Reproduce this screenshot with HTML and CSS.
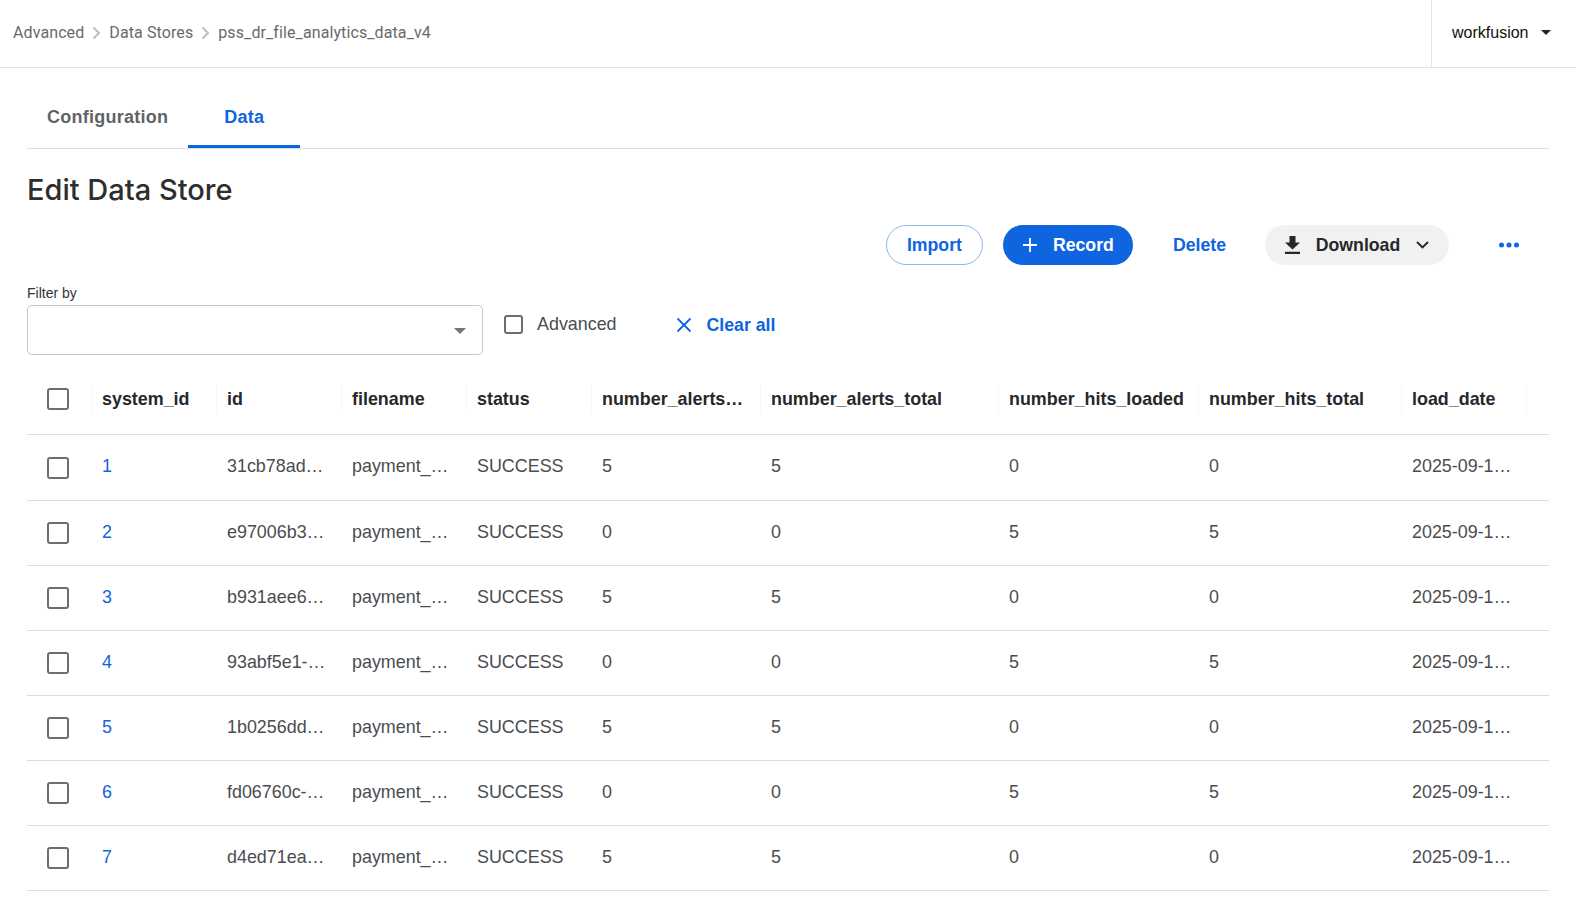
FILE: index.html
```html
<!DOCTYPE html>
<html lang="en">
<head>
  <meta charset="UTF-8">
  <title>Edit Data Store</title>
  <link rel="stylesheet" href="styles.css">
</head>
<body>
  <div class="header">
    <div class="breadcrumbs">
      <span>Advanced</span>
      <svg width="9" height="14" viewBox="0 0 9 14"><path d="M1.5 1.5 7 7l-5.500 5.500" fill="none" stroke="#bdbdbd" stroke-width="2"/></svg>
      <span>Data Stores</span>
      <svg width="9" height="14" viewBox="0 0 9 14"><path d="M1.5 1.5 7 7l-5.500 5.500" fill="none" stroke="#bdbdbd" stroke-width="2"/></svg>
      <span>pss_dr_file_analytics_data_v4</span>
    </div>
    <div class="user-menu">
      <span>workfusion</span>
      <span class="caret caret-dark"></span>
    </div>
  </div>

  <div class="main-container">
    <div class="tabs">
      <div class="tab">Configuration</div>
      <div class="tab tab-active">Data</div>
    </div>

    <h1 class="page-title">Edit Data Store</h1>

    <div class="actions">
      <button class="btn btn-outline">Import</button>
      <button class="btn btn-primary">
        <svg width="16" height="16" viewBox="0 0 16 16"><path d="M8 1v14M1 8h14" stroke="#fff" stroke-width="1.8"/></svg>
        Record
      </button>
      <button class="btn btn-link">Delete</button>
      <button class="btn btn-grey">
        <svg width="15" height="18" viewBox="0 0 15 18"><path d="M4.500 0h6v6.500H15L7.500 13.500 0 6.500h4.500zM0 15.800h15V18H0z" fill="#26282b"/></svg>
        <span class="btn-grey-label">Download</span>
        <svg width="13" height="8" viewBox="0 0 13 8"><path d="M1 1l5.500 5.500L12 1" fill="none" stroke="#26282b" stroke-width="1.900"/></svg>
      </button>
      <button class="btn-more">
        <svg width="20" height="6" viewBox="0 0 20 6"><circle cx="2.500" cy="3" r="2.500" fill="#0f64e0"/><circle cx="10" cy="3" r="2.500" fill="#0f64e0"/><circle cx="17.500" cy="3" r="2.500" fill="#0f64e0"/></svg>
      </button>
    </div>

    <div class="filters">
      <div class="filter-field">
        <label class="filter-label">Filter by</label>
        <div class="filter-select"><span class="caret caret-grey"></span></div>
      </div>
      <div class="filter-advanced">
        <span class="checkbox checkbox-small"></span>
        <span>Advanced</span>
      </div>
      <div class="clear-all">
        <svg width="16" height="16" viewBox="0 0 16 16"><path d="M1.500 1.500l13 13M14.500 1.500l-13 13" stroke="#0f64e0" stroke-width="1.800"/></svg>
        <span>Clear all</span>
      </div>
    </div>

    <table class="data-table">
      <colgroup>
        <col class="col-check">
        <col class="col-std"><col class="col-std"><col class="col-std"><col class="col-std">
        <col class="col-alerts-loaded">
        <col class="col-alerts-total">
        <col class="col-hits">
        <col class="col-hits-total">
        <col class="col-std">
        <col>
      </colgroup>
      <thead>
        <tr>
          <th class="check-cell"><span class="checkbox"></span></th>
          <th>system_id</th>
          <th>id</th>
          <th>filename</th>
          <th>status</th>
          <th>number_alerts_loaded</th>
          <th>number_alerts_total</th>
          <th class="th-wide">number_hits_loaded</th>
          <th>number_hits_total</th>
          <th>load_date</th>
          <th class="th-end"></th>
        </tr>
      </thead>
      <tbody>
        <tr><td class="check-cell"><span class="checkbox"></span></td><td class="link">1</td><td>31cb78ad-4f1c-4e</td><td>payment_alerts.csv</td><td>SUCCESS</td><td>5</td><td>5</td><td>0</td><td>0</td><td>2025-09-15 10:22</td><td></td></tr>
        <tr><td class="check-cell"><span class="checkbox"></span></td><td class="link">2</td><td>e97006b3-a2d1-47</td><td>payment_hits.csv</td><td>SUCCESS</td><td>0</td><td>0</td><td>5</td><td>5</td><td>2025-09-15 10:22</td><td></td></tr>
        <tr><td class="check-cell"><span class="checkbox"></span></td><td class="link">3</td><td>b931aee6-77c0-41</td><td>payment_alerts.csv</td><td>SUCCESS</td><td>5</td><td>5</td><td>0</td><td>0</td><td>2025-09-15 10:22</td><td></td></tr>
        <tr><td class="check-cell"><span class="checkbox"></span></td><td class="link">4</td><td>93abf5e1-06bd-4c</td><td>payment_hits.csv</td><td>SUCCESS</td><td>0</td><td>0</td><td>5</td><td>5</td><td>2025-09-15 10:22</td><td></td></tr>
        <tr><td class="check-cell"><span class="checkbox"></span></td><td class="link">5</td><td>1b0256dd-93ea-48</td><td>payment_alerts.csv</td><td>SUCCESS</td><td>5</td><td>5</td><td>0</td><td>0</td><td>2025-09-15 10:22</td><td></td></tr>
        <tr><td class="check-cell"><span class="checkbox"></span></td><td class="link">6</td><td>fd06760c-5b12-4a</td><td>payment_hits.csv</td><td>SUCCESS</td><td>0</td><td>0</td><td>5</td><td>5</td><td>2025-09-15 10:22</td><td></td></tr>
        <tr><td class="check-cell"><span class="checkbox"></span></td><td class="link">7</td><td>d4ed71ea-c830-4d</td><td>payment_alerts.csv</td><td>SUCCESS</td><td>5</td><td>5</td><td>0</td><td>0</td><td>2025-09-15 10:22</td><td></td></tr>
      </tbody>
    </table>
  </div>
</body>
</html>
```

FILE: styles.css
```css
body {
  font-family: Roboto, "Liberation Sans", sans-serif;
  background-color: white;
  color: #26282b;
  margin: 0;
  padding: 0;
  overflow: hidden;
}

.header {
  height: 67px;
  display: flex;
  justify-content: space-between;
  border-bottom: 1px solid #e4e4e4;
}

.breadcrumbs {
  display: flex;
  align-items: center;
  gap: 8px;
  padding-left: 13px;
  padding-bottom: 2px;
  font-size: 16px;
  letter-spacing: 0.1px;
  color: #666a6f;
}

.user-menu {
  width: 145px;
  box-sizing: border-box;
  border-left: 1px solid #e4e4e4;
  padding-left: 20px;
  padding-bottom: 2px;
  display: flex;
  align-items: center;
  gap: 13px;
  font-family: "Liberation Sans", sans-serif;
  font-size: 16px;
  color: #111;
}

.caret {
  width: 0;
  height: 0;
  border-left: 5.5px solid transparent;
  border-right: 5.5px solid transparent;
}

.caret-dark {
  border-top: 5.5px solid #222;
}

.caret-grey {
  border-top: 6.5px solid #757575;
  border-left-width: 6.5px;
  border-right-width: 6.5px;
}

.main-container {
  padding: 0 27px;
}

.tabs {
  display: flex;
  height: 81px;
  box-sizing: border-box;
  border-bottom: 1px solid #dedede;
}

.tab {
  padding: 39px 20px 0;
  font-family: "Liberation Sans", sans-serif;
  font-size: 18px;
  letter-spacing: 0.25px;
  font-weight: bold;
  color: #5f6368;
}

.tab-active {
  color: #0f64e0;
  padding: 39px 36px 0;
  height: 38px;
  border-bottom: 3px solid #0f64e0;
}

.page-title {
  margin: 24px 0 0;
  font-family: Inter, sans-serif;
  font-size: 29px;
  line-height: 34px;
  font-weight: 500;
  color: #2e2e2e;
}

.actions {
  display: flex;
  justify-content: flex-end;
  align-items: center;
  margin-top: 18px;
  padding-right: 30px;
}

.btn {
  height: 40px;
  border-radius: 20px;
  border: none;
  background: none;
  display: flex;
  align-items: center;
  font-family: "Liberation Sans", sans-serif;
  font-size: 17.7px;
  font-weight: bold;
  cursor: pointer;
}

.btn-outline {
  width: 97px;
  justify-content: center;
  border: 1px solid #8db5ef;
  color: #0f64e0;
  margin-right: 20px;
}

.btn-primary {
  width: 130px;
  justify-content: center;
  gap: 15px;
  background-color: #0f64e0;
  color: white;
}

.btn-link {
  color: #0f64e0;
  padding: 0 20px;
  margin: 0 19px 0 20px;
}

.btn-grey {
  width: 184px;
  justify-content: center;
  background-color: #f1f1f1;
  color: #26282b;
}

.btn-grey-label {
  margin: 0 16px;
}

.btn-more {
  border: none;
  background: none;
  padding: 0;
  margin-left: 50px;
  display: flex;
}

.filters {
  display: flex;
  margin-top: 19px;
}

.filter-field {
  width: 456px;
}

.filter-label {
  display: block;
  font-family: "Liberation Sans", sans-serif;
  font-size: 14px;
  line-height: 18px;
  color: #333;
  margin-bottom: 3px;
}

.filter-select {
  height: 46px;
  border: 1px solid #c6c6c6;
  border-radius: 5px;
  display: flex;
  align-items: center;
  justify-content: flex-end;
  padding-right: 16px;
  padding-top: 2px;
}

.filter-advanced {
  display: flex;
  align-items: center;
  gap: 14px;
  margin-left: 21px;
  height: 24px;
  margin-top: 28px;
  font-family: "Liberation Sans", sans-serif;
  font-size: 17.9px;
  color: #4a4d50;
}

.clear-all {
  display: flex;
  align-items: center;
  gap: 15px;
  margin-left: 59px;
  height: 24px;
  margin-top: 29px;
  font-family: "Liberation Sans", sans-serif;
  font-size: 17.7px;
  font-weight: bold;
  color: #0f64e0;
}

.checkbox {
  display: block;
  box-sizing: border-box;
  width: 22px;
  height: 22px;
  border: 2.500px solid #6b6e72;
  border-radius: 3px;
}

.checkbox-small {
  width: 19px;
  height: 19px;
}

.data-table {
  width: 100%;
  table-layout: fixed;
  border-collapse: collapse;
  margin-top: 16px;
  font-family: "Liberation Sans", sans-serif;
  font-size: 17.9px;
}

.col-check { width: 65px; }
.col-std { width: 125px; }
.col-alerts-loaded { width: 169px; }
.col-alerts-total { width: 238px; }
.col-hits { width: 200px; }
.col-hits-total { width: 203px; }

.data-table th,
.data-table td {
  text-align: left;
  padding: 0 14px 0 10px;
  white-space: nowrap;
  overflow: hidden;
  text-overflow: ellipsis;
  border-bottom: 1px solid #dcdcdc;
}

.data-table th {
  position: relative;
  height: 57px;
  padding-bottom: 6px;
  font-weight: bold;
  color: #26282b;
}

/* faint column resize handle */
.data-table th::after {
  content: "";
  position: absolute;
  right: 0;
  top: 14px;
  height: 28px;
  width: 1px;
  background-color: #f6f6f6;
}

.data-table th.th-end::after {
  display: none;
}

.data-table th.th-wide {
  padding-right: 8px;
}

.data-table td {
  height: 62px;
  padding-bottom: 2px;
  color: #4a4d50;
}

.data-table tbody tr:first-child td {
  height: 63px;
}

.data-table .check-cell {
  padding-left: 20px;
  padding-right: 0;
  text-overflow: clip;
}

.data-table th.check-cell {
  height: 55px;
  padding-bottom: 8px;
}

.data-table td.check-cell {
  padding-bottom: 0;
  height: 64px;
}

.data-table tbody tr:first-child td.check-cell {
  height: 65px;
}

.data-table .link {
  color: #0f64e0;
}
```
